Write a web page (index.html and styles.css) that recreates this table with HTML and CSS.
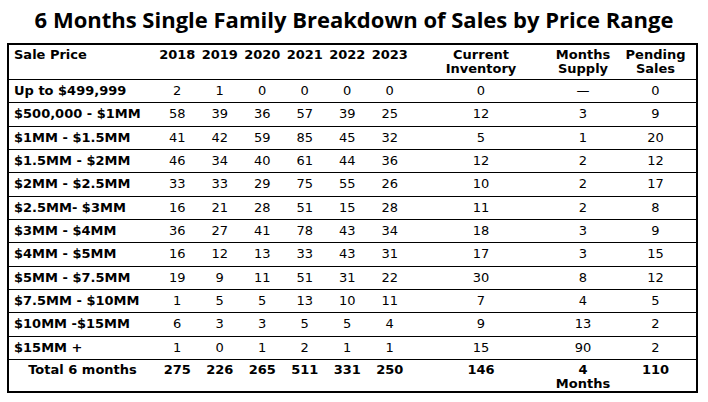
FILE: index.html
```html
<!DOCTYPE html>
<html>
<head>
<meta charset="utf-8">
<link rel="stylesheet" href="styles.css">
</head>
<body>
<div class="page">
  <h1 class="title">6 Months Single Family Breakdown of Sales by Price Range</h1>
  <table class="sales">
    <colgroup>
      <col class="c-price"><col class="c-year"><col class="c-year"><col class="c-year"><col class="c-year"><col class="c-year"><col class="c-year"><col class="c-inv"><col class="c-sup"><col class="c-pend">
    </colgroup>
    <thead>
      <tr>
        <th class="lbl">Sale Price</th>
        <th>2018</th><th>2019</th><th>2020</th><th>2021</th><th>2022</th><th>2023</th>
        <th>Current<br>Inventory</th><th>Months<br>Supply</th><th>Pending<br>Sales</th>
      </tr>
    </thead>
    <tbody>
      <tr><th class="lbl">Up to $499,999</th><td>2</td><td>1</td><td>0</td><td>0</td><td>0</td><td>0</td><td>0</td><td>—</td><td>0</td></tr>
      <tr><th class="lbl">$500,000 - $1MM</th><td>58</td><td>39</td><td>36</td><td>57</td><td>39</td><td>25</td><td>12</td><td>3</td><td>9</td></tr>
      <tr><th class="lbl">$1MM - $1.5MM</th><td>41</td><td>42</td><td>59</td><td>85</td><td>45</td><td>32</td><td>5</td><td>1</td><td>20</td></tr>
      <tr><th class="lbl">$1.5MM - $2MM</th><td>46</td><td>34</td><td>40</td><td>61</td><td>44</td><td>36</td><td>12</td><td>2</td><td>12</td></tr>
      <tr><th class="lbl">$2MM - $2.5MM</th><td>33</td><td>33</td><td>29</td><td>75</td><td>55</td><td>26</td><td>10</td><td>2</td><td>17</td></tr>
      <tr><th class="lbl">$2.5MM- $3MM</th><td>16</td><td>21</td><td>28</td><td>51</td><td>15</td><td>28</td><td>11</td><td>2</td><td>8</td></tr>
      <tr><th class="lbl">$3MM - $4MM</th><td>36</td><td>27</td><td>41</td><td>78</td><td>43</td><td>34</td><td>18</td><td>3</td><td>9</td></tr>
      <tr><th class="lbl">$4MM - $5MM</th><td>16</td><td>12</td><td>13</td><td>33</td><td>43</td><td>31</td><td>17</td><td>3</td><td>15</td></tr>
      <tr><th class="lbl">$5MM - $7.5MM</th><td>19</td><td>9</td><td>11</td><td>51</td><td>31</td><td>22</td><td>30</td><td>8</td><td>12</td></tr>
      <tr><th class="lbl">$7.5MM - $10MM</th><td>1</td><td>5</td><td>5</td><td>13</td><td>10</td><td>11</td><td>7</td><td>4</td><td>5</td></tr>
      <tr><th class="lbl">$10MM -$15MM</th><td>6</td><td>3</td><td>3</td><td>5</td><td>5</td><td>4</td><td>9</td><td>13</td><td>2</td></tr>
      <tr><th class="lbl">$15MM +</th><td>1</td><td>0</td><td>1</td><td>2</td><td>1</td><td>1</td><td>15</td><td>90</td><td>2</td></tr>
    </tbody>
    <tfoot>
      <tr>
        <th>Total 6 months</th>
        <th>275</th><th>226</th><th>265</th><th>511</th><th>331</th><th>250</th><th>146</th><th>4<br>Months</th><th>110</th>
      </tr>
    </tfoot>
  </table>
</div>
</body>
</html>
```

FILE: styles.css
```css
html, body {
  margin: 0;
  padding: 0;
  background: #ffffff;
}

.page {
  width: 708px;
  height: 402px;
  padding: 7px 11px 0 7px;
  box-sizing: border-box;
}

.title {
  margin: 0;
  height: 36px;
  font-family: "Open Sans", "Lato", sans-serif;
  font-weight: 700;
  font-size: 22px;
  line-height: 24px;
  letter-spacing: 0;
  color: #000;
  text-align: center;
  padding-left: 4px;
}

.sales {
  width: 690px;
  border-collapse: collapse;
  table-layout: fixed;
  border: 2px solid #000;
  font-family: "DejaVu Sans", Verdana, sans-serif;
  font-size: 13px;
  color: #000;
}

.c-price { width: 148px; }
.c-year { width: 42.5px; }
.c-inv { width: 140px; }
.c-sup { width: 64px; }
.c-pend { width: 82px; }

.sales th,
.sales td {
  padding: 0;
  text-align: center;
  vertical-align: middle;
  white-space: nowrap;
  line-height: 14px;
}

.sales th {
  font-weight: 700;
}

.sales td {
  font-weight: 400;
}

.sales thead th {
  height: 31px;
  vertical-align: top;
  padding-top: 3px;
  border-bottom: 1px solid #000;
}

.sales .lbl {
  text-align: left;
  padding-left: 5px;
}

.sales tbody tr td,
.sales tbody tr th {
  height: 22.33px;
  border-bottom: 1px solid #000;
}

.sales tfoot th {
  height: 27px;
  vertical-align: top;
  padding-top: 3px;
}
```
